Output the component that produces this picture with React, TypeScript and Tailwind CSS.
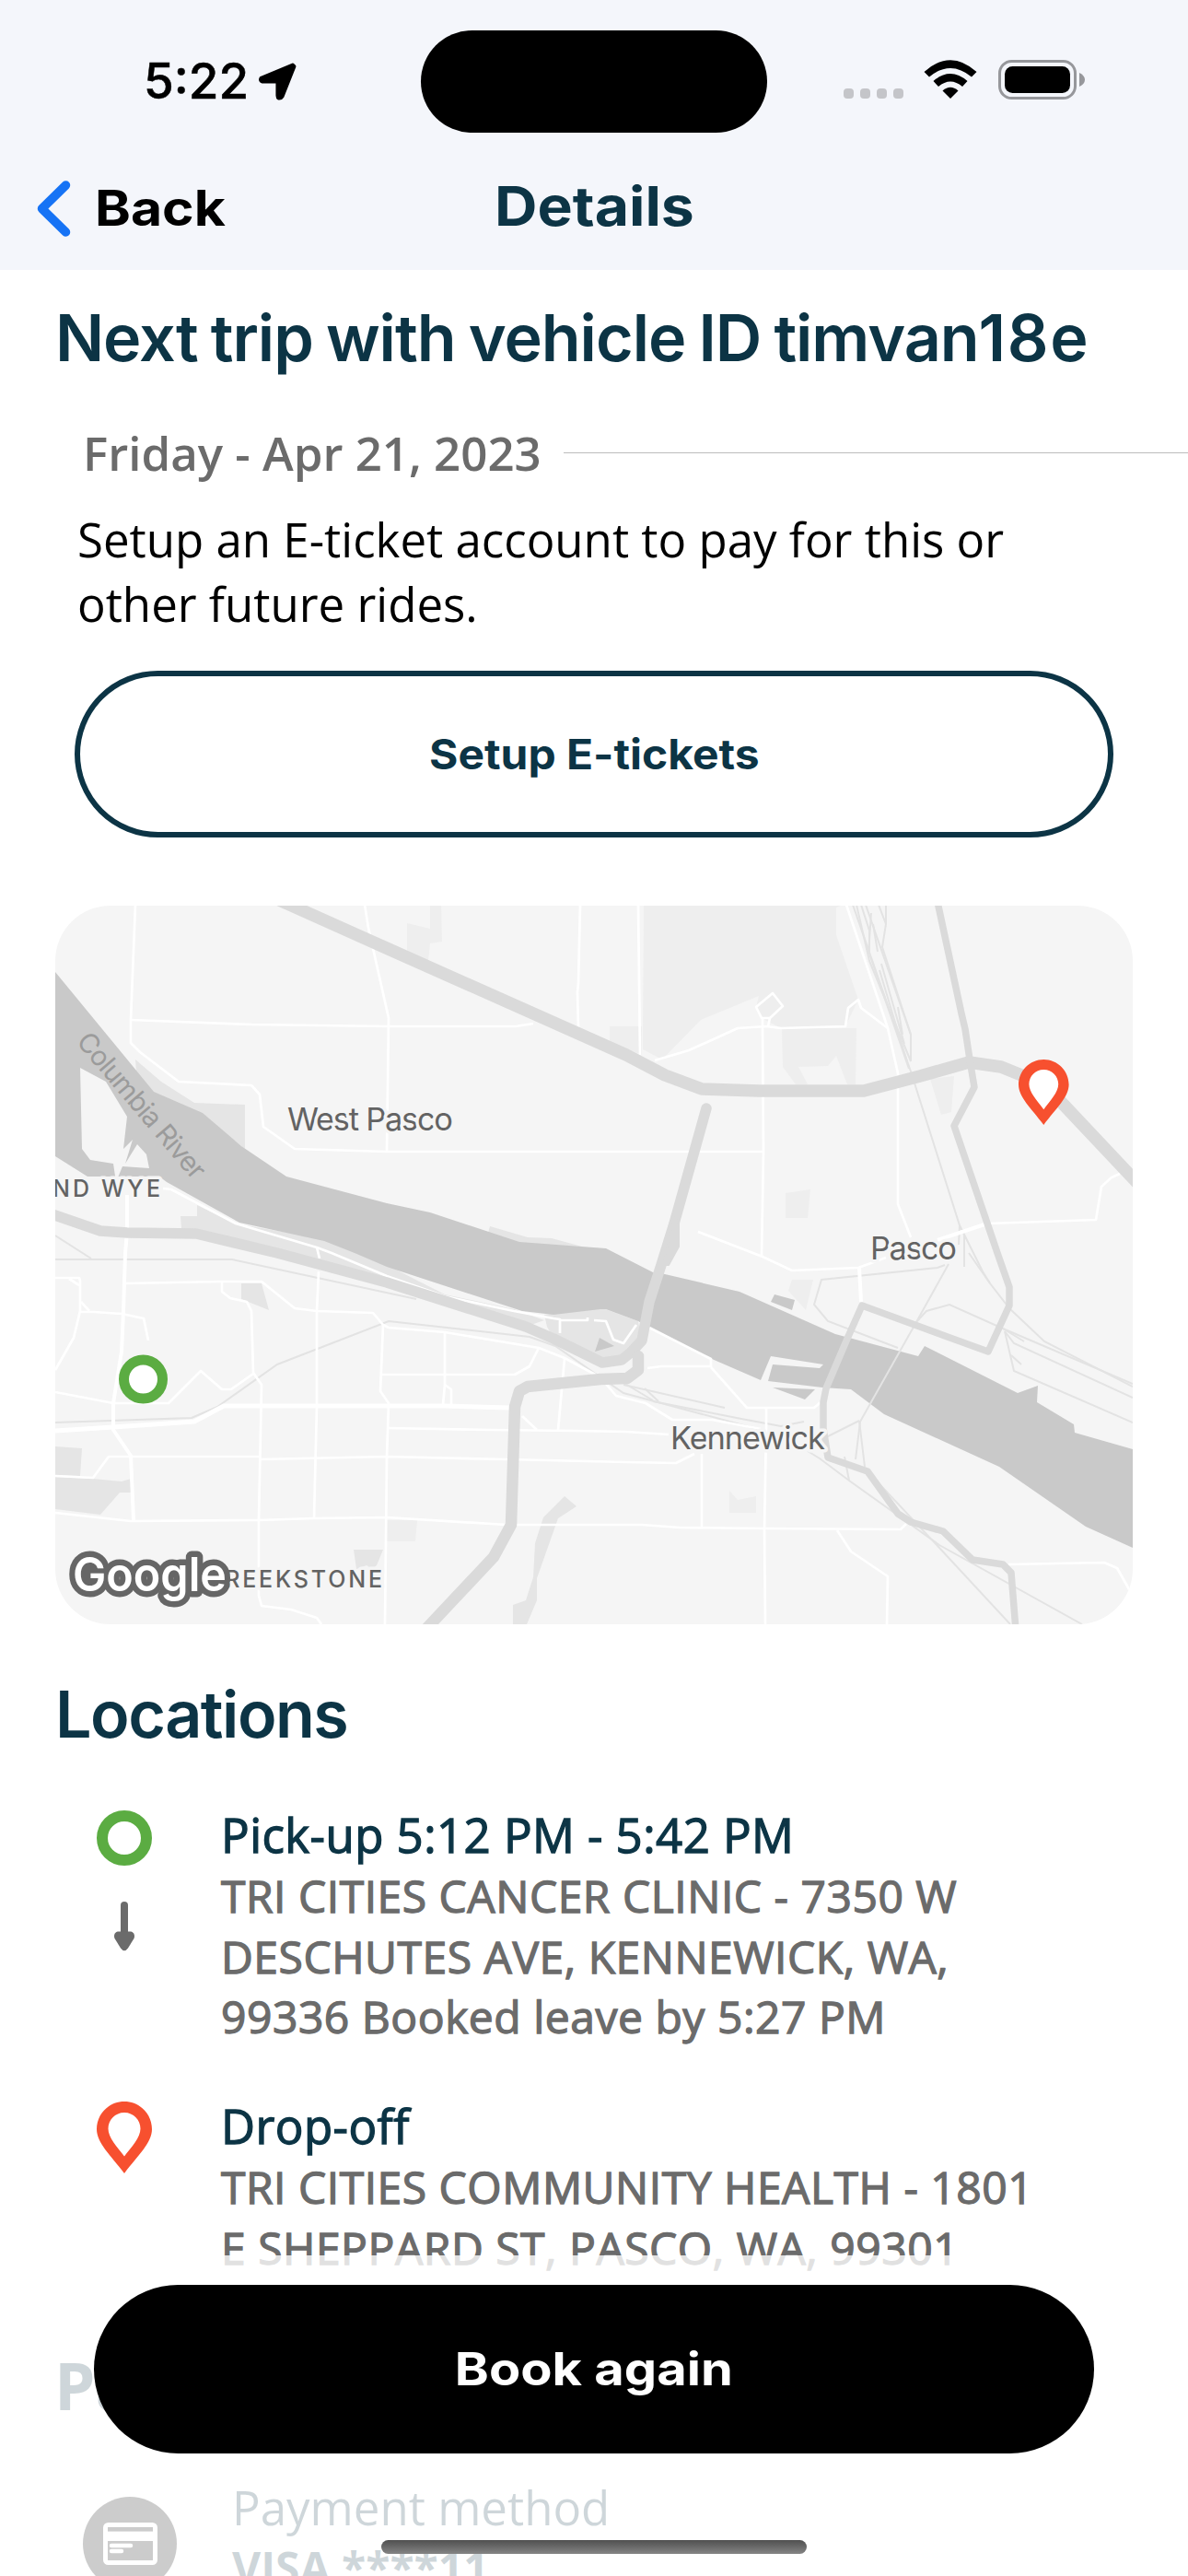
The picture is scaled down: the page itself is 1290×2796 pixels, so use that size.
const parks = [
  'M639 0H853L848 2V32L872 102L858 131L788 133L767 122L761 110L764 98L701 124L659 167L638 156Z',
  'M602 131H637V162L602 148Z',
  'M789 133H870L869 194H860L848 163L839 174L807 175L817 194H804L790 175Z',
  'M950 188L976 185L973 224L962 227Z',
  'M793 312L820 308L817 339H793Z',
  'M407 -1H419L420 39L407 41L405 60L382 50V19L407 25Z',
  'M800 406H823L815 439L796 418Z',
  'M732 635L741 645L761 641V659H732Z',
  'M360 667H393L391 690H360Z',
]

const darkParks = [
  'M87 167L115 191L151 214L206 216V264L160 230L107 204L88 180Z',
  'M154 325L196 345L292 362L360 390L423 422L498 438L531 450L511 457L360 409L241 377L153 356L137 350L136 337H154Z',
  'M472 348L513 360L539 361L572 370L504 367L470 355Z',
  'M531 444L592 436L633 451L637 472L620 493L594 496L541 470L534 457Z',
  'M202 410H224L232 439L202 427Z',
  'M0 587L29 589L27 619L0 618Z',
  'M0 620L41 622L72 625L82 622L83 637H70L49 661L0 655Z',
  'M324 699H356L349 716L344 720L338 716L327 720Z',
  'M553 641L566 652L546 665L523 730V754L512 780H497V759L511 754L519 729L521 692L530 664Z',
]

const water = [
  'M0 72L107 202L160 225L202 261L251 294L360 323L407 333L504 365L598 372L649 398L662 400L743 419L847 465L937 489L944 478L1045 529L1067 521L1066 539L1106 563L1107 572L1170 590V697L1119 674L1025 609L900 552L864 525L833 523L774 516L779 498L830 502L834 498L777 489L766 515L713 492L645 458L633 451L598 438H592L541 444L507 440L360 392L325 377L292 364L200 344L121 300L113 294H35L0 272Z',
  'M781 422L803 428L800 439L777 430Z',
  'M779 523L825 525L814 536Z',
  'M591 469L607 478L586 484Z',
]

const rails = [
  'M0 358L39 383',
  'M0 384H192L392 427',
  'M0 561L148 556L176 544L241 498L362 451L515 468L543 478L617 529L766 569',
  'M604 510L649 537',
  'M617 520L727 545',
  'M640 524L655 538',
  'M649 538L745 557L788 565L813 560',
  'M866 -1L929 180L982 347L1007 397L1015 410',
  'M870 -1L884 60L929 169',
  'M875 -1L884 27V52L927 177',
  'M880 -1L929 140V169',
  'M886 8L883 52M888 20L893 50',
  'M894 -1L902 20L898 45L929 140',
  'M902 -1V20',
  'M897 63L922 150M895 70L925 170M915 110L920 140',
  'M970 389L935 452L874 560L869 601',
  'M873 559L879 609',
  'M873 559L837 577',
  'M966 390L958 393L832 406L824 433L839 451L915 480',
  'M935 452L946 440L971 433L1029 459L1170 519',
  'M992 377L1015 410L1036 437L1074 473L1170 522',
  'M1031 462L1041 475L1170 534',
  'M1029 459L1052 473',
  'M1031 462L1041 505L1170 561',
  'M1038 488L1049 498',
  'M817 592L830 600L862 624L960 694L1115 780',
  'M857 598L862 624',
  'M882 614L960 697L1037 780',
  'M982 347L981 368M987 357V392',
]

const streets = [
  'M87 -1L82 124V149L92 159L134 191L213 195L222 205L226 240L260 264L360 267H769',
  'M82 124L213 129L360 131H500L519 128',
  'M336 -1L340 24L362 122L360 267',
  'M570 -1L568 84L567 94L568 132',
  'M633 -1L635 162',
  'M651 168L688 157L741 133L772 131L788 133L858 131L861 111L872 102L875 111L904 133',
  'M767 122L761 110L779 95L790 109L776 122ZM776 122L774 131',
  'M768 122V131L769 267L767 380',
  'M859 -1L904 133L915 182V324L929 360',
  'M698 354L768 381L800 396L872 393L902 382',
  'M1013 345L1130 341L1136 305L1147 295L1156 291',
  'M117 307L126 308L196 345L284 371L300 377L360 402L423 424L498 440L541 448L548 449V464',
  'M548 450H578V447M585 450L598 451L606 471L617 475L631 455',
  'M284 371L287 383M286 397L284 440V542L281 665',
  'M0 404H26L27 407V440L20 469L0 504',
  'M15 405L26 412M28 430L37 440',
  'M27 441H42L72 443L96 448L101 472',
  'M76 410L180 408H224L260 437L284 440L345 442L356 455L362 458L423 463L525 480L553 491L592 512L609 532L641 540L670 558H713L766 568',
  'M181 408V419L190 426L208 430L213 440L215 507L224 520L221 667V749L224 760L256 764L284 773L289 780',
  'M0 528L63 540H123L158 505L181 525H191L215 508',
  'M356 455L353 527L362 540L360 599L358 780',
  'M355 509H499L515 500L525 480',
  'M423 463V520L421 542M423 520L430 525V542',
  'M553 492L546 569',
  'M360 567L474 569L564 570L620 571L666 574',
  'M507 554L523 569',
  'M0 619L41 621L58 598H221M221 601L360 598L490 601L620 604L674 605L694 595',
  'M0 659L82 668L221 667L281 665L360 664L490 672H637L678 675L770 676L918 677L924 671',
  'M643 502L658 500H712V492L645 458',
  'M712 501L751 545H824L831 539',
  'M772 545V567L770 677L771 780',
  'M702 595V674',
  'M849 678L864 701L904 728L903 780',
  'M1035 715L1139 713L1153 719L1166 742L1170 750',
]

const wideStreets = [
  'M78 314V354L76 377L74 440L72 484L63 540V569L82 597L85 667',
  'M873 393L875 430',
  'M958 363L1009 346',
]

const PIN = 'M30 0C46.6 0 60 13.4 60 30C60 45 45 58 30 78C15 58 0 45 0 30C0 13.4 13.4 0 30 0Z'
const PIN_HOLE = 'M30 12C40 12 47.5 20 47.5 29.5C47.5 39 38 49 30 59.5C22 49 12.5 39 12.5 29.5C12.5 20 20 12 30 12Z'

const StatusBar = () => (
  <div className="relative flex h-[176px] items-center justify-between pl-[156px] pr-[111px]">
    <div className="flex items-center">
      <span className="w-[124px] text-[53px] font-medium leading-[62px] text-black [-webkit-text-stroke:0.500px]">5:22</span>
      <svg className="h-[43px] w-[43px]" viewBox="0 0 42 42">
        <path d="M37 3.500L38.500 5L26 36.500Q24.500 39 22 38.500Q21 38 21 36V21H5Q2 20 3.500 17.500Z" fill="#000" stroke="#000" strokeWidth="4" strokeLinejoin="round" />
      </svg>
    </div>
    <div className="absolute left-[457px] top-[33px] h-[111px] w-[376px] rounded-full bg-black" />
    <div className="flex items-center">
      <div className="mt-[27px] flex gap-[7px]">
        {[0, 1, 2, 3].map((i) => (
          <span key={i} className="h-[11px] w-[11px] rounded-[4px] bg-[#c4c5c9]" />
        ))}
      </div>
      <svg className="-mt-[3px] ml-[22px] h-[43px] w-[58px]" viewBox="0 0 58 43">
        <path d="M0.500 13Q29 -12.500 57.500 13L52 18.500Q29 -0.500 6 18.500Z" />
        <path d="M10.500 23Q29 7 47.500 23L42 29Q29 18 16 29Z" />
        <path d="M20.500 33.500Q29 26 37.500 33.500L29 42Z" />
      </svg>
      <svg className="-mt-[3px] ml-[23px] h-[43px] w-[95px]" viewBox="0 0 95 43">
        <rect x="1.500" y="1.500" width="82" height="40" rx="13" fill="none" stroke="#96979b" strokeWidth="3" />
        <rect x="7" y="7" width="71" height="29" rx="8.500" />
        <path d="M88 14Q94 17 94 21.500Q94 26 88 29Z" fill="#96979b" />
      </svg>
    </div>
  </div>
)

const MapView = () => (
  <div className="mx-[60px] mt-[74px] h-[780px] overflow-hidden rounded-[60px] bg-[#f5f5f5]">
    <svg className="h-full w-full" viewBox="0 0 1170 780" fontFamily="Inter, 'Liberation Sans', sans-serif">
      <g fill="#eeeeee">{parks.map((d) => <path key={d} d={d} />)}</g>
      <g fill="#e5e5e5">{darkParks.map((d) => <path key={d} d={d} />)}</g>
      <g fill="#c9c9c9">{water.map((d) => <path key={d} d={d} />)}</g>
      <path d="M27 176L55 191L78 229L74 264L84 254L76 280L89 259L99 270L102 285L73 283L66 300L63 280L38 276L29 264Z" fill="#f5f5f5" />
      <g fill="none" stroke="#e3e3e3" strokeWidth="2">{rails.map((d) => <path key={d} d={d} />)}</g>
      <g fill="none" stroke="#ffffff" strokeWidth="2.700" strokeLinejoin="round">
        {streets.map((d) => <path key={d} d={d} />)}
        <g strokeWidth="4">{wideStreets.map((d) => <path key={d} d={d} />)}</g>
        <path d="M0 570L63 566L151 560L183 543H423L493 545" strokeWidth="5" />
      </g>
      <g fill="none" stroke="#dadada" strokeLinejoin="round" strokeLinecap="round">
        <path d="M221 -16L364 48L620 162L662 184L702 199L764 201H878L939 185L992 170L1027 175L1074 194L1094 215L1176 302" strokeWidth="13.500" />
        <path d="M-6 334L49 353L78 355L153 356L241 377L360 409L511 457L541 470L594 496L615 493L625 485L637 472L645 430L658 390L672 345L707 220" strokeWidth="11.500" />
        <path d="M672 338L677 345V370L666 390L660 390Z" fill="#dadada" strokeWidth="2" />
        <path d="M398 790L476 707L495 672L499 544L504 527L513 522L592 514L621 513L633 504V489" strokeWidth="12.500" />
        <path d="M958 -4L984 117L988 134L993 167L998 197L976 239L1007 330L1023 377L1036 414V434L1013 484L966 467L876 434L860 470L837 524L834 539V567L839 599L882 614L915 660L929 669L964 679L996 710L1029 715L1038 724L1043 786" strokeWidth="7.500" />
      </g>
      <g fill="#636363" stroke="#f5f5f5" strokeWidth="7" strokeLinejoin="round" paintOrder="stroke">
        <text x="252" y="244" fontSize="34.500" textLength="180">West Pasco</text>
        <text x="885" y="384" fontSize="34.500" textLength="94">Pasco</text>
        <text x="668" y="590" fontSize="34.500" textLength="168">Kennewick</text>
        <text x="-3" y="316" fontSize="25" fontWeight="500" textLength="117">ND WYE</text>
        <text x="163" y="740" fontSize="25" fontWeight="500" textLength="192">CREEKSTONE</text>
      </g>
      <text transform="translate(22 148) rotate(49.7)" fontSize="29.500" fill="#9b9b9b" textLength="198">Columbia River</text>
      <text x="19" y="744" fontSize="51" fontWeight="600" fill="#ffffff" stroke="#666666" strokeWidth="13" strokeLinejoin="round" paintOrder="stroke" textLength="167" lengthAdjust="spacingAndGlyphs">Google</text>
      <circle cx="95.500" cy="514" r="21" fill="#ffffff" stroke="#5bac42" strokeWidth="11" />
      <g transform="translate(1046 167) scale(0.91)">
        <path d={PIN} fill="#f7502f" />
        <path d={PIN_HOLE} fill="#ffffff" />
      </g>
    </svg>
  </div>
)

interface StopProps {
  title: string
  lines: string[]
  type: 'pickup' | 'dropoff'
}

const Stop = ({ title, lines, type }: StopProps) => (
  <div className="flex gap-[75px] pl-[105px]">
    <div className="flex w-[60px] flex-col items-center pt-[8px]">
      {type === 'pickup' ? (
        <>
          <div className="h-[60px] w-[60px] rounded-full border-[12.500px] border-[#5bac42]" />
          <svg className="mt-[39px] h-[54px] w-[24px]" viewBox="0 0 24 54" fill="#6b6b6b">
            <rect x="8" y="0" width="8" height="40" rx="4" />
            <path d="M6 32.500H18C22 32.500 24 36 22.500 40L16 50.500Q12 56 8 50.500L1.500 40C0 36 2 32.500 6 32.500Z" />
          </svg>
        </>
      ) : (
        <svg className="h-[78px] w-[60px]" viewBox="0 0 60 78">
          <path d={PIN} fill="#f7502f" />
          <path d={PIN_HOLE} fill="#ffffff" />
        </svg>
      )}
    </div>
    <div className="whitespace-nowrap font-['Open_Sans','Noto_Sans',sans-serif] [-webkit-text-stroke:1.300px]">
      <p className="text-[51px] leading-[68px] tracking-[0.450px] text-[#0c3445]">{title}</p>
      {lines.map((line) => (
        <p key={line} className="text-[48px] leading-[65.500px] tracking-[0.520px] text-[#6b6b6b]">{line}</p>
      ))}
    </div>
  </div>
)

export default function App() {
  return (
    <div className="relative h-[2796px] w-[1290px] overflow-hidden bg-white font-['Inter','Liberation_Sans',sans-serif] text-[#0c3445]">
      <header className="h-[293px] bg-[#f4f6fb]">
        <StatusBar />
        <div className="grid h-[101px] grid-cols-[1fr_auto_1fr] items-center">
          <div className="flex items-center pl-[40px]">
            <svg className="h-[61px] w-[37px]" viewBox="0 0 37 61">
              <path d="M31.500 5L5.500 30.500L31.500 56" fill="none" stroke="#1673f5" strokeWidth="9.500" strokeLinecap="round" strokeLinejoin="round" />
            </svg>
            <span className="-mt-[2px] ml-[26px] origin-left scale-x-[1.110] text-[53px] font-bold leading-[64px] text-black">Back</span>
          </div>
          <h1 className="-mt-[5px] scale-x-[1.090] text-[59px] font-bold leading-[70px]">Details</h1>
        </div>
      </header>

      <main>
        <h2 className="mt-[32px] whitespace-nowrap pl-[60px] text-[70px] font-semibold leading-[84px] tracking-[-1.030px] [word-spacing:-2.500px]">
          Next trip with vehicle ID timva<span className="tracking-[1.600px]">n18</span>e
        </h2>

        <div className="font-['Open_Sans','Noto_Sans',sans-serif]">
          <div className="mt-[47px] flex h-[70px] items-center pl-[90px]">
            <span className="whitespace-nowrap text-[51px] font-semibold leading-[70px] text-[#6b6b6b]">Friday - Apr 21, 2023</span>
            <span className="ml-[24px] h-px flex-1 bg-[#bdbdbd]" />
          </div>
          <p className="mt-[24px] whitespace-nowrap pl-[84px] text-[51px] leading-[70px] text-black">
            Setup an E-ticket account to pay for this or
            <br />
            other future rides.
          </p>
        </div>

        <button className="ml-[81px] mt-[38px] flex h-[181px] w-[1128px] items-center justify-center rounded-full border-[6px] border-[#0c3445] text-[45px] font-bold">
          <span className="scale-x-[1.065]">Setup E-tickets</span>
        </button>

        <MapView />

        <h2 className="mt-[56px] pl-[60px] text-[70px] font-semibold leading-[84px] tracking-[-1.500px]">Locations</h2>
        <div className="mt-[54px] flex flex-col gap-[51.500px]">
          <Stop
            type="pickup"
            title="Pick-up 5:12 PM - 5:42 PM"
            lines={['TRI CITIES CANCER CLINIC - 7350 W', 'DESCHUTES AVE, KENNEWICK, WA,', '99336 Booked leave by 5:27 PM']}
          />
          <Stop type="dropoff" title="Drop-off" lines={['TRI CITIES COMMUNITY HEALTH - 1801', 'E SHEPPARD ST, PASCO, WA, 99301']} />
        </div>

        <div className="font-['Open_Sans','Noto_Sans',sans-serif]">
          <h2 className="mt-[69px] pl-[59px] text-[71px] font-bold leading-[96px]">Payment</h2>
          <div className="mt-[52px] flex pl-[90px]">
            <div className="mt-[21px] flex h-[102px] w-[102px] items-center justify-center rounded-full bg-black">
              <svg className="h-[46px] w-[59px]" viewBox="0 0 59 46">
                <rect x="2.500" y="2.500" width="54" height="41" rx="3" fill="none" stroke="#fff" strokeWidth="5" />
                <path d="M3 9.500H56V20H3Z" fill="#fff" />
                <path d="M5 7.200H54" stroke="#000" strokeWidth="4" />
                <path d="M9 25H30M9 31H20" stroke="#fff" strokeWidth="4.500" strokeLinecap="round" />
              </svg>
            </div>
            <div className="ml-[60px] whitespace-nowrap">
              <p className="text-[51px] leading-[65px]">Payment method</p>
              <p className="text-[48px] font-bold leading-[66px]">VISA ****11</p>
            </div>
          </div>
        </div>
      </main>

      {/* translucent footer over the scrolling content */}
      <footer className="absolute inset-x-0 bottom-0 flex h-[348px] flex-col items-center bg-white/80 pt-[32px]">
        <button className="flex h-[183px] w-[1086px] items-center justify-center rounded-full bg-black text-[50px] font-bold text-white">
          <span className="scale-x-[1.120]">Book again</span>
        </button>
        <div className="mt-[94px] h-[15px] w-[462px] rounded-full bg-linear-to-b from-[#505050] to-[#858585]" />
      </footer>
    </div>
  )
}
